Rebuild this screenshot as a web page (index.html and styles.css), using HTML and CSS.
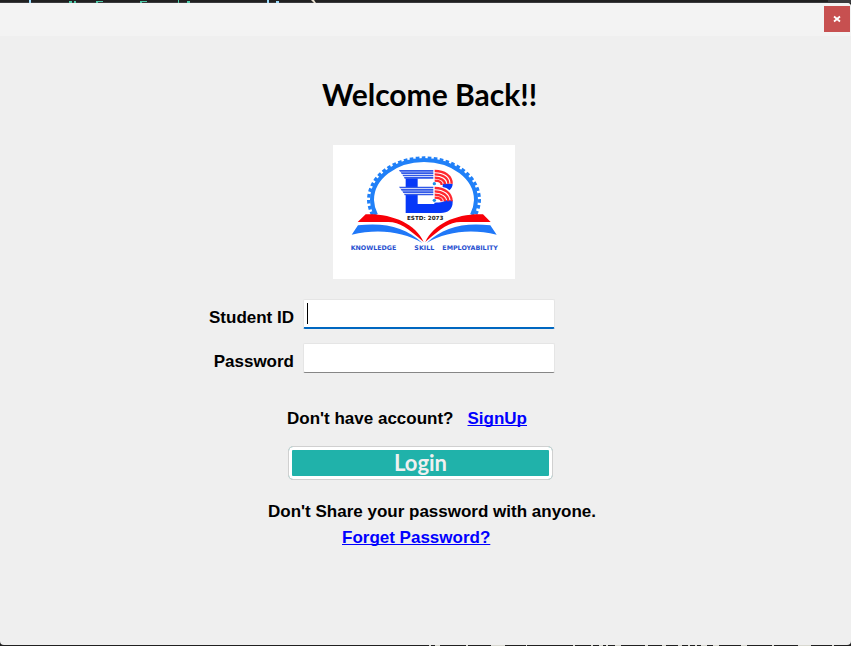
FILE: index.html
```html
<!DOCTYPE html>
<html lang="en">
<head>
<meta charset="utf-8">
<title>Login</title>
<link rel="stylesheet" href="styles.css">
</head>
<body>
<div class="backdrop" aria-hidden="true">
  <svg width="851" height="3" viewBox="0 0 851 3">
    <path fill="#3a3a3d" d="M0 2h851v1H0zM828 0h23v3h-23z"/>
    <path fill="#9cdcfe" d="M29 0h2v3h-2zM267 0h2v3h-2zM276 1h3v2h-3z"/>
    <path fill="#4ec9a8" d="M69 1h3v2h-3zM74 1h2v2h-2zM96 1h7v1h-5v1h-2zM140 1h7v1h-5v1h-2zM178 0h1v3h-1zM187 1h3v2h-3z"/>
    <path fill="#e8e0d0" d="M311 0h3l2 3h-2z"/>
  </svg>
</div>
<div class="window">
  <header class="titlebar">
    <button class="close" type="button" aria-label="Close">
      <svg width="8" height="8" viewBox="0 0 8 8"><path d="M1 1.5L7 6.5M7 1.5L1 6.5" stroke="#fff" stroke-width="1.8"/></svg>
    </button>
  </header>
  <main class="panel">
    <h1 class="title">Welcome Back!!</h1>
    <svg class="logo" viewBox="24 15 546 402" role="img" aria-label="College logo">
      <rect x="24" y="15" width="546" height="402" fill="#fff"/>
      <g fill="none" stroke="#2080f8">
        <path d="M153 225A156 125 0 0 1 141 180A156 120 0 0 1 453 180A156 125 0 0 1 441 225" stroke-width="12"/>
        <path d="M143 225A165 130 0 0 1 131 180A166 126 0 0 1 463 180A165 130 0 0 1 451 225" stroke-width="10" stroke-dasharray="11 7"/>
      </g>
      <path fill="#0638f8" d="M242 115h36v26h-36zM242 165h36v27h50v-4c20 0 32-3 32-7h23v6c0 21-14 32-36 32H242zM353 131h30c0 8-4 15-10 20-5-6-12-9-20-10z"/>
      <g fill="#3158e8">
        <path d="M222 90h103v5H225zM227 97h98v5h-95zM232 104h93v5h-90zM237 111h88v5h-86z"/>
        <path d="M222 140h103v5H225zM227 147h98v5h-95zM232 154h93v5h-90zM237 161h88v5h-86z"/>
      </g>
      <g fill="none" stroke="#ff2830" stroke-width="7">
        <path d="M329 93c30 0 51 14 51 38M329 103c24 0 41 11 41 28M329 113c18 0 31 8 31 20M329 122c13 0 21 4 21 13"/>
        <path d="M329 144c30 0 51 16 51 40M329 154c24 0 41 13 41 30M329 164c18 0 31 9 31 20M329 173c13 0 21 4 21 11"/>
      </g>
      <g fill="#2090e8"><circle cx="328" cy="131" r="5"/><circle cx="328" cy="181" r="5"/></g>
      <path fill="#f80008" d="M122 223C200 220 272 251 296 306C247 264 225 246 190 246H98zM474 223C396 220 326 251 301 306C350 264 372 246 407 246H497z"/>
      <path fill="#2078f8" d="M99 256C180 247 242 261 292 309C235 275 160 265 80 284zM496 256C415 247 355 261 305 309C362 275 437 265 515 284z"/>
      <text class="estd" x="246" y="239">ESTD: 2073</text>
      <g class="motto"><text x="77" y="331">KNOWLEDGE</text><text x="268" y="331">SKILL</text><text x="352" y="331">EMPLOYABILITY</text></g>
    </svg>
    <form class="form">
      <div class="field">
        <label for="student">Student ID</label>
        <div class="box active"><input id="student" type="text"><span class="caret"></span></div>
      </div>
      <div class="field">
        <label for="password">Password</label>
        <div class="box"><input id="password" type="password"></div>
      </div>
      <p class="signup"><span>Don't have account?</span><a href="#signup">SignUp</a></p>
      <button class="login" type="submit">Login</button>
      <p class="note">Don't Share your password with anyone.</p>
      <a class="forgot" href="#reset">Forget Password?</a>
    </form>
  </main>
</div>
<div class="backdrop bottom" aria-hidden="true">
  <svg width="851" height="1" viewBox="0 0 851 1"><path stroke="#d8d8d0" d="M429 .5h2M435 .5h5M466 .5h2M491 .5h14M526 .5h1M573 .5h2M591 .5h2M599 .5h4M606 .5h2M615 .5h6M645 .5h3M662 .5h4M678 .5h4M688 .5h2M695 .5h2M701 .5h6M713 .5h6M741 .5h6M772 .5h2M798 .5h13M832 .5h2"/></svg>
</div>
</body>
</html>
```
FILE: styles.css
```css
* { box-sizing: border-box; }
body {
  margin: 0;
  min-height: 100vh;
  display: flex;
  flex-direction: column;
  background: #202020;
  color: #000;
  font: bold 17px/20px "Liberation Sans", Arial, sans-serif;
}
.backdrop { height: 3px; overflow: hidden; background: #202020; }
.backdrop.bottom { height: 1px; }
.backdrop svg { display: block; }
.window {
  flex: 1;
  background: #efefef;
  border-radius: 0 4px 4px 4px;
  overflow: hidden;
}
.titlebar {
  height: 33px;
  padding: 3px 1px;
  display: flex;
  justify-content: flex-end;
  align-items: flex-start;
  background: #f3f3f3;
}
.close {
  width: 26px;
  height: 26px;
  padding: 0;
  border: 0;
  display: grid;
  place-items: center;
  background: #c75050;
}
.panel {
  width: fit-content;
  min-width: 437px;
  margin: 0 auto;
  padding-top: 38px;
}
.title {
  margin: 0 0 31px 115px;
  font: bold 30px/40px Lato, sans-serif;
}
.logo { display: block; width: 182px; height: 134px; margin-left: 126px; }
.estd { font: bold 17px "DejaVu Sans", sans-serif; fill: #181818; }
.motto { font: bold 19px "DejaVu Sans", sans-serif; fill: #2850d0; }
.form { margin-top: 20px; }
.field {
  display: grid;
  grid-template-columns: 88px 252px;
  column-gap: 8px;
  align-items: center;
  margin-bottom: 14px;
}
.field label { text-align: right; padding: 8px 1px 0 0; }
.box {
  position: relative;
  height: 30px;
  background: #fff;
  border: 1px solid #e5e5e5;
  border-bottom-color: #868686;
  border-radius: 2px;
}
.box.active { border-bottom: 2px solid #0067c0; }
.box input {
  display: block;
  width: 100%;
  height: 100%;
  padding: 0 4px;
  border: 0;
  outline: 0;
  background: transparent;
  font: inherit;
}
.caret { position: absolute; left: 3px; top: 3px; width: 1px; height: 21px; background: #000; }
a { color: #00f; text-decoration: underline; text-decoration-skip-ink: none; }
.signup { display: flex; gap: 14px; margin: 36px 0 17px 80px; }
.login {
  display: block;
  width: 265px;
  height: 34px;
  margin-left: 81px;
  padding: 0;
  border: 1px solid #d0d0d0;
  border-radius: 5px;
  background: #20b2aa;
  box-shadow: inset 0 0 0 3px #fff;
  color: #f0f0f0;
  font: bold 22px/28px Lato, sans-serif;
}
.note { margin: 22px 0 6px 61px; }
.forgot { display: block; width: fit-content; margin-left: 135px; }
```
